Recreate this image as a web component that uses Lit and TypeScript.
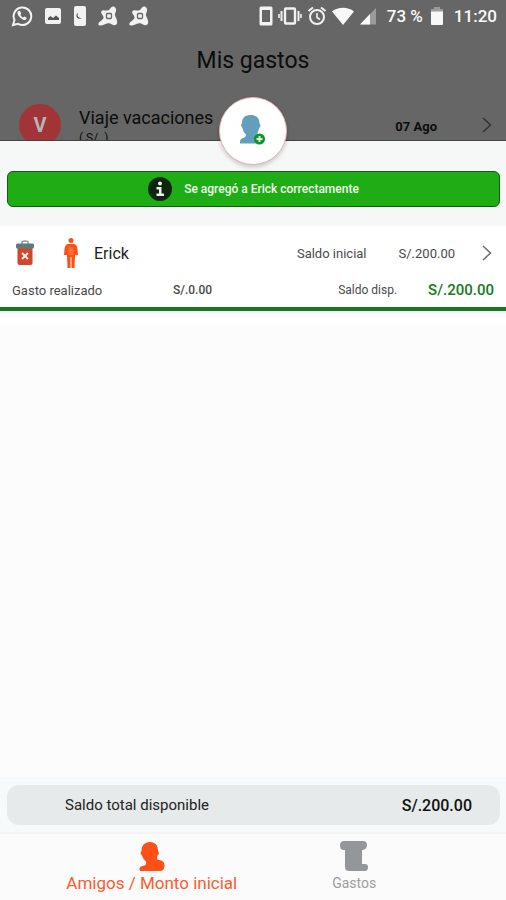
import { LitElement, html, css, svg } from "lit";
import { customElement, property } from "lit/decorators.js";

const icons = {
  whatsapp: svg`<svg viewBox="0 0 22 22" width="22" height="22">
    <path d="M2 20l1.500-5A8.800 8.800 0 1 1 7 18.800z" fill="none" stroke="#f2f2f2" stroke-width="2"/>
    <path d="M7.500 6c-2 1-1 4 1.500 6.500s5.500 3.500 6.500 1.500c.5-1 0-1.500-2-2.500-1 0-1 1-1.500 1-1-.5-2-1.500-2.500-2.500 0-.5 1-1 .5-1.800C9.200 6 8.800 5.500 7.500 6z" fill="#f2f2f2"/></svg>`,
  image: svg`<svg viewBox="0 0 18 18" width="18" height="18">
    <rect x="1" y="1" width="16" height="16" rx="2" fill="#f2f2f2"/><path d="M4 13v-2l2.500-2L9 11l3-2.500 3 2.500v2z" fill="#555"/></svg>`,
  moon: svg`<svg viewBox="0 0 14 20" width="14" height="20">
    <rect x="1" width="12" height="20" rx="2" fill="#f2f2f2"/><path d="M5 7c-1 3 0 5 4 5-3 2-6 0-5.500-3 0-1 .5-2 1.500-2z" fill="#555"/></svg>`,
  avast: svg`<svg viewBox="0 0 20 20" width="20" height="20">
    <path d="M3.500 5C4.500 3.500 7 4.500 9.500 4.500 12 4.500 12.500.5 15 .5S18.500 3 18 5c-.5 2-1.500 3-1 4.500.5 2 2.500 4.500 2.200 7S16.500 20 14 18.500c-2-1.200-3-1.500-5-1-2.500.5-4 2-6.500 2C0 19.500 0 18 1 16.500c1-1.500 4-2.500 4.500-4.500C6 9.500 2 7.500 3.500 5z" fill="#f2f2f2"/>
    <rect x="8.500" y="7.500" width="5" height="5" rx="1" fill="none" stroke="#666" stroke-width="1.300"/></svg>`,
  phone: svg`<svg viewBox="0 0 14 20" width="14" height="20"><rect x=".5" y=".5" width="13" height="19" rx="1.500" fill="#f2f2f2"/><rect x="3" y="4" width="8" height="12" fill="#666"/></svg>`,
  vibrate: svg`<svg viewBox="0 0 24 18" width="24" height="18" fill="none" stroke="#f2f2f2">
    <rect x="7" y="1.500" width="10" height="15" rx="1" stroke-width="2.400"/><path d="M3.500 4v10M20.500 4v10" stroke-width="2"/><path d="M1 7v4M23 7v4" stroke-width="1.600"/></svg>`,
  alarm: svg`<svg viewBox="0 0 20 20" width="20" height="20" fill="none" stroke="#f2f2f2">
    <circle cx="10" cy="11" r="7" stroke-width="2"/><path d="M10 7v4.500l3 2" stroke-width="1.600"/><path d="M1.500 5L6 1.500M18.500 5L14 1.500" stroke-width="2"/></svg>`,
  wifi: svg`<svg viewBox="0 0 22 18" width="22" height="18"><path d="M0 4.500C6-.5 16-.5 22 4.500L11 18z" fill="#f8f8f8"/></svg>`,
  signal: svg`<svg viewBox="0 0 18 18" width="18" height="18"><path d="M1 17.500L17 1v16.500z" fill="#9b9b9b"/><path d="M1 17.500L11 7v10.500z" fill="#f8f8f8"/></svg>`,
  battery: svg`<svg viewBox="0 0 14 20" width="14" height="20"><path d="M1 6V3h3V1h6v2h3v3z" fill="#9b9b9b"/><path d="M1 5.500h12V18a1 1 0 0 1-1 1H2a1 1 0 0 1-1-1z" fill="#f8f8f8"/></svg>`,
  chevron: svg`<svg viewBox="0 0 10 16" width="10" height="16"><path d="M1 1l7.500 7L1 15" fill="none" stroke="currentColor" stroke-width="1.500"/></svg>`,
  addFriend: svg`<svg viewBox="0 0 28 32" width="28" height="32">
    <path d="M11 0C5.500 0 3 3.500 3 8.500 1.500 9 2 12 3.500 13c.5 3 1.500 4.500 3.500 6.500 0 2-1 3-4 4C1 24 1 26 1 28.500h20V20c-1-.5-2-.5-2.500-1 0-2 1-3 1.500-5.500 1.500-1.500 2-4 .5-5C20.500 3 17 0 11 0z" fill="#629fbd"/>
    <circle cx="20.500" cy="24" r="5.500" fill="#0d9428"/><path d="M20.500 21v6M17.500 24h6" stroke="#e4f5e6" stroke-width="2"/></svg>`,
  info: svg`<svg viewBox="0 0 24 24" width="24" height="24"><circle cx="12" cy="12" r="12" fill="#0b260b"/>
    <circle cx="12" cy="6.500" r="2" fill="#eee"/><path d="M8.500 10h5v6.500H16V19H8.500v-2.500H11v-4H8.500z" fill="#eee"/></svg>`,
  trash: svg`<svg viewBox="0 0 20 26" width="20" height="26">
    <path d="M7 4V2c0-1 1-1 3-1s3 0 3 1v2" fill="none" stroke="#8b9a9a" stroke-width="1.500"/>
    <path d="M2.500 8h15v15q0 2-2 2h-11q-2 0-2-2z" fill="#d2462c"/><rect x="1" y="3.500" width="18" height="5" rx="1.500" fill="#5c7c7b"/>
    <path d="M7 13l6 6M13 13l-6 6" stroke="#fbe9e4" stroke-width="2"/></svg>`,
  man: svg`<svg viewBox="0 0 14 30" width="14" height="30" fill="#fd4f16">
    <circle cx="7" cy="2.500" r="2.500"/><path d="M4.500 6h5c2.500 0 3.500 2 4 5l.5 6h-3l-.5 13h-3V19h-1v11h-3L3 17H0l.5-6c.5-3 1.500-5 4-5z"/>
    <path d="M4.500 9h5v8h-5z" fill="#fd6f3d"/></svg>`,
  person: svg`<svg viewBox="0 0 26 29" width="26" height="29">
    <path d="M11 0C5.500 0 2.500 3.500 2.500 9 1 10 1.500 12.500 3 13.500c1 3 2 4.500 4 6 .5 3-.5 4-3.500 4.500C1 24.500 0 26 .5 28c.5 1 1 1 2 1H20c4 0 5.500-2 5.500-5.500S23.500 18.500 20 18c-2 0-2.500-1.500-1.500-4.500 1.500-1 2-3.500.5-4.500C19 3.500 16.500 0 11 0z" fill="#fd5019"/></svg>`,
  receipt: svg`<svg viewBox="0 0 28 30" width="28" height="30">
    <path d="M4 0h19q4 0 4 4t-4 5h-1v14h3q3 0 3 3 0 4-3 4H9q-4 0-4-4V9H4Q0 9 0 4.500T4 0z" fill="#949699"/></svg>`,
};

@customElement("status-bar")
class StatusBar extends LitElement {
  static styles = css`
    :host { display: flex; justify-content: space-between; align-items: center; height: 32px; padding: 0 9px 0 11px; color: #fafafa; font-size: 17px; font-weight: 500; }
    .group { display: flex; align-items: center; gap: 11px; }
    .right { gap: 5px; }
    .clock { margin-left: 5px; }
    .level { margin: 0 2px 0 5px; white-space: nowrap; }
    svg { display: block; }
  `;
  render() {
    return html`
      <div class="group">${icons.whatsapp}${icons.image}${icons.moon}${icons.avast}${icons.avast}</div>
      <div class="group right">
        ${icons.phone}${icons.vibrate}${icons.alarm}${icons.wifi}${icons.signal}
        <span class="level">73 %</span>${icons.battery}<time class="clock">11:20</time>
      </div>`;
  }
}

@customElement("friend-card")
class FriendCard extends LitElement {
  @property() name = "";
  @property() initial = "";
  @property() spent = "";
  @property() available = "";
  static styles = css`
    :host { display: block; background: #fff; border-bottom: 4px solid #157a18; color: #4a4a4a; font-size: 13px; }
    .row { display: flex; align-items: center; padding: 0 12px; }
    .top { height: 54px; padding-left: 15px; padding-right: 14px; }
    .bottom { height: 20px; padding-bottom: 7px; }
    button { border: 0; background: none; padding: 0; color: #6c6c6c; display: block; cursor: pointer; }
    svg { display: block; }
    .man { margin: 0 16px 0 29px; }
    .name { flex: 1; color: #1d1d1d; font-size: 16px; }
    .initial { margin-right: 27px; margin-left: 32px; }
    .label { width: 161px; }
    .spent { flex: 1; font-size: 12px; font-weight: 500; }
    .left { font-size: 12px; }
    .available { margin-left: 31px; color: #157a18; font-size: 15px; font-weight: 500; }
  `;
  render() {
    return html`
      <div class="row top">
        <button aria-label="Eliminar">${icons.trash}</button>
        <span class="man">${icons.man}</span>
        <span class="name">${this.name}</span>
        <span>Saldo inicial</span><span class="initial">${this.initial}</span>
        <button aria-label="Ver detalle">${icons.chevron}</button>
      </div>
      <div class="row bottom">
        <span class="label">Gasto realizado</span><span class="spent">${this.spent}</span>
        <span class="left">Saldo disp.</span><span class="available">${this.available}</span>
      </div>`;
  }
}

@customElement("app-root")
class AppRoot extends LitElement {
  static styles = css`
    :host { display: flex; flex-direction: column; min-height: 100vh; background: #fcfcfc; font-family: Roboto, "Liberation Sans", sans-serif; color: #222; }
    svg { display: block; }
    .behind { background: #666; color: #0c0c0c; }
    h1 { margin: 0; padding: 14px 0; font-size: 23px; line-height: 30px; font-weight: 400; text-align: center; }
    .trip { display: flex; height: 51px; overflow: hidden; padding: 0 14px 0 19px; box-sizing: border-box; border-bottom: 1px solid #444; }
    .avatar { flex: none; width: 42px; height: 42px; margin: 14px 18px 0 0; border-radius: 50%; background: #a03436; color: #b5b5b5; font-size: 20px; line-height: 42px; font-weight: 700; text-align: center; }
    .trip-text { flex: 1; padding-top: 16px; font-size: 18px; line-height: 24px; white-space: nowrap; }
    .currency { font-size: 12px; line-height: 16px; }
    .date { margin: 27px 45px 0 0; font-size: 13px; line-height: 20px; font-weight: 700; }
    .go { margin-top: 27px; color: #333; }
    .sheet { position: relative; background: #f6f8f8; padding: 30px 6px 19px 7px; }
    .fab { position: absolute; top: -44px; left: 50%; translate: -50%; width: 68px; height: 68px; padding: 0; display: grid; place-items: center; border: 1px solid #e8b4b4; border-radius: 50%; background: #fff; box-shadow: 0 2px 4px #0003; cursor: pointer; }
    .alert { display: flex; align-items: center; justify-content: center; gap: 12px; height: 34px; border: 1px solid #145a14; border-radius: 6px; background: #1fad15; color: #f0fbef; font-size: 12px; font-weight: 500; }
    .list { flex: 1; }
    .list-end { height: 13px; background: #fff; }
    .summary { padding: 8px 6px 7px 7px; background: #f7fafa; border-bottom: 2px solid #f0f4f4; }
    .total { display: flex; justify-content: space-between; align-items: center; height: 40px; padding: 0 28px 0 58px; border-radius: 12px; background: #e6eaea; font-size: 16px; }
    .label { font-size: 15px; }
    .amount { color: #111; font-weight: 500; }
    nav { display: flex; padding: 0 10%; background: #fbfbfb; }
    nav a { flex: 1; display: flex; flex-direction: column; align-items: center; justify-content: flex-end; padding: 7px 0 5px; white-space: nowrap; text-decoration: none; color: #9d9d9d; font-size: 14px; line-height: 24px; }
    nav a.active { color: #fd5a2c; font-size: 17px; }
  `;
  render() {
    return html`
      <header class="behind">
        <status-bar></status-bar>
        <h1>Mis gastos</h1>
        <div class="trip">
          <span class="avatar">V</span>
          <div class="trip-text">Viaje vacaciones<div class="currency">( S/. )</div></div>
          <time class="date">07 Ago</time>
          <span class="go">${icons.chevron}</span>
        </div>
      </header>
      <section class="sheet">
        <button class="fab" aria-label="Agregar amigo">${icons.addFriend}</button>
        <div class="alert" role="status">${icons.info}<span>Se agregó a Erick correctamente</span></div>
      </section>
      <main class="list">
        <friend-card name="Erick" initial="S/.200.00" spent="S/.0.00" available="S/.200.00"></friend-card>
        <div class="list-end"></div>
      </main>
      <section class="summary">
        <div class="total"><span class="label">Saldo total disponible</span><span class="amount">S/.200.00</span></div>
      </section>
      <nav>
        <a class="active" href="#amigos">${icons.person}<span>Amigos / Monto inicial</span></a>
        <a href="#gastos">${icons.receipt}<span>Gastos</span></a>
      </nav>`;
  }
}
